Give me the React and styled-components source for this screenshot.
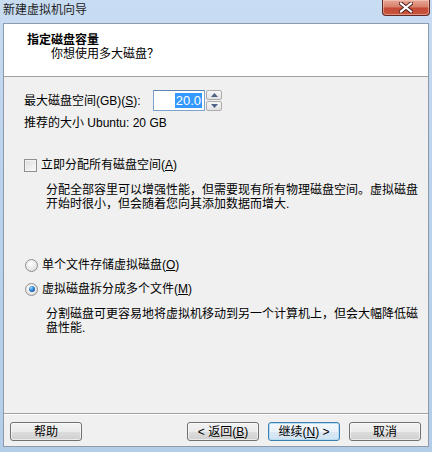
import React from "react";
import styled, { createGlobalStyle } from "styled-components";

const GlobalStyle = createGlobalStyle`
  html, body {
    margin: 0;
    padding: 0;
  }
  body {
    font-family: "Liberation Sans", "Noto Sans CJK SC", sans-serif;
    font-size: 12px;
    color: #000;
    background: #bcd3ec;
  }
`;

const Window = styled.div`
  width: 432px;
  height: 452px;
  display: flex;
  flex-direction: column;
  background: linear-gradient(180deg, #c8dcf2 0%, #bad2ec 40%, #b4cde8 100%);
  overflow: hidden;
`;

const TitleBar = styled.div`
  height: 23px;
  display: flex;
  justify-content: space-between;
  align-items: flex-start;
  padding-left: 3px;
  flex-shrink: 0;
`;

const Title = styled.span`
  font-size: 12px;
  line-height: 20px;
  color: #1e1e1e;
`;

const CloseButton = styled.div`
  width: 46px;
  height: 15px;
  margin-right: 2px;
  border: 1px solid #5e2a26;
  border-top: none;
  border-radius: 0 0 4px 4px;
  background: linear-gradient(180deg, #e7a897 0%, #d8806c 45%, #c44a36 55%, #c9573f 100%);
  box-shadow: inset 0 0 0 1px rgba(255, 220, 210, 0.45);
  display: flex;
  align-items: center;
  justify-content: center;
`;

const Client = styled.div`
  flex: 1;
  margin: 0 3px 5px 3px;
  border: 1px solid #8c9aab;
  background: #f0f0f0;
  display: flex;
  flex-direction: column;
`;

const Header = styled.div`
  height: 53px;
  background: #fff;
  border-bottom: 1px solid #a0a0a0;
  padding: 9px 0 0 23px;
  box-sizing: border-box;
`;

const HeaderTitle = styled.div`
  font-weight: bold;
  line-height: 14px;
`;

const HeaderSub = styled.div`
  line-height: 14px;
  margin: 0 0 0 24px;
`;

const Body = styled.div`
  flex: 1;
  padding: 13px 0 0 20px;
`;

const FieldRow = styled.div`
  display: flex;
  align-items: center;
  height: 21px;
`;

const FieldLabel = styled.label`
  width: 129px;
  line-height: 14px;
`;

const Spin = styled.div`
  display: flex;
  height: 21px;
`;

const SpinInput = styled.div`
  width: 48px;
  height: 19px;
  border: 1px solid #7da2ce;
  border-top-color: #5d85b3;
  background: #fff;
  display: flex;
  justify-content: flex-end;
  align-items: center;
  padding-right: 2px;
`;

const Selected = styled.span`
  background: #3399ff;
  color: #fff;
  line-height: 15px;
  padding: 0 1px;
  font-size: 13px;
`;

const SpinButtons = styled.div`
  display: flex;
  flex-direction: column;
  gap: 1px;
  margin-left: 1px;
`;

const SpinButton = styled.div`
  width: 14px;
  height: 9px;
  border: 1px solid #acacac;
  border-radius: 2px;
  background: linear-gradient(180deg, #f6f6f6, #e2e2e2);
  display: flex;
  align-items: center;
  justify-content: center;
`;

const Hint = styled.div`
  line-height: 14px;
  margin-top: 5px;
`;

const OptionRow = styled.label`
  display: flex;
  align-items: center;
  gap: 4px;
  line-height: 14px;
  margin-top: ${(p) => p.$top}px;
`;

const CheckBox = styled.span`
  width: 11px;
  height: 11px;
  border: 1px solid #8f8f8f;
  background: linear-gradient(135deg, #dcdcdc, #fbfbfb);
  box-shadow: inset 0 0 0 1px #f4f4f4;
  flex-shrink: 0;
`;

const Radio = styled.span`
  width: 11px;
  height: 11px;
  border-radius: 50%;
  border: 1px solid #8f8f8f;
  background: radial-gradient(circle at 40% 35%, #ffffff 0%, #e6e6e6 60%, #cfcfcf 100%);
  flex-shrink: 0;
  display: flex;
  align-items: center;
  justify-content: center;
  margin-left: 1px;

  &::after {
    content: "";
    display: ${(p) => (p.$checked ? "block" : "none")};
    width: 6px;
    height: 6px;
    border-radius: 50%;
    background: radial-gradient(circle at 35% 30%, #9fd7ff 0%, #2a84d2 45%, #0d3f83 100%);
  }
`;

const Desc = styled.p`
  margin: 11px 0 0 22px;
  line-height: 14px;
`;

const Key = styled.u`
  text-underline-offset: 1px;
`;

const Separator = styled.div`
  height: 1px;
  background: #a0a0a0;
  border-bottom: 1px solid #fff;
  margin-bottom: 7px;
`;

const Footer = styled.div`
  display: flex;
  align-items: center;
  padding: 0 7px 5px 6px;
  gap: 9px;
`;

const Spacer = styled.div`
  flex: 1;
`;

const Button = styled.button`
  width: 72px;
  height: 19px;
  padding: 0;
  font: inherit;
  font-size: 12px;
  line-height: 14px;
  color: #000;
  border: 1px solid ${(p) => (p.$default ? "#3c7fb1" : "#707070")};
  border-radius: 3px;
  background: ${(p) =>
    p.$default
      ? "linear-gradient(180deg, #f4f9fd 0%, #eaf3fa 50%, #dbe9f5 51%, #d0e2f1 100%)"
      : "linear-gradient(180deg, #f2f2f2 0%, #ebebeb 50%, #dddddd 51%, #cfcfcf 100%)"};
  box-shadow: ${(p) =>
    p.$default ? "inset 0 0 0 1px #b8dcf4" : "inset 0 0 0 1px rgba(255,255,255,0.6)"};
`;

function CloseGlyph() {
  return (
    <svg width="14" height="11" viewBox="0 0 14 11">
      <path
        d="M2 1.5 L12 9.5 M12 1.5 L2 9.5"
        stroke="#4a1a16"
        strokeWidth="4"
        strokeLinecap="square"
      />
      <path
        d="M2 1.5 L12 9.5 M12 1.5 L2 9.5"
        stroke="#ffffff"
        strokeWidth="2.2"
        strokeLinecap="square"
      />
    </svg>
  );
}

function Arrow({ up }) {
  return (
    <svg width="7" height="4" viewBox="0 0 7 4">
      <path d={up ? "M0 4 L3.5 0 L7 4 Z" : "M0 0 L3.5 4 L7 0 Z"} fill="#4f6287" />
    </svg>
  );
}

export default function App() {
  return (
    <>
      <GlobalStyle />
      <Window>
        <TitleBar>
          <Title>新建虚拟机向导</Title>
          <CloseButton>
            <CloseGlyph />
          </CloseButton>
        </TitleBar>
        <Client>
          <Header>
            <HeaderTitle>指定磁盘容量</HeaderTitle>
            <HeaderSub>你想使用多大磁盘？</HeaderSub>
          </Header>
          <Body>
            <FieldRow>
              <FieldLabel>
                最大磁盘空间(GB)(<Key>S</Key>):
              </FieldLabel>
              <Spin>
                <SpinInput>
                  <Selected>20.0</Selected>
                </SpinInput>
                <SpinButtons>
                  <SpinButton>
                    <Arrow up />
                  </SpinButton>
                  <SpinButton>
                    <Arrow />
                  </SpinButton>
                </SpinButtons>
              </Spin>
            </FieldRow>
            <Hint>推荐的大小 Ubuntu: 20 GB</Hint>

            <OptionRow $top={28}>
              <CheckBox />
              <span>
                立即分配所有磁盘空间(<Key>A</Key>)
              </span>
            </OptionRow>
            <Desc>
              分配全部容里可以增强性能，但需要现有所有物理磁盘空间。虚拟磁盘
              <br />
              开始时很小，但会随着您向其添加数据而增大.
            </Desc>

            <OptionRow $top={47}>
              <Radio />
              <span>
                单个文件存储虚拟磁盘(<Key>O</Key>)
              </span>
            </OptionRow>
            <OptionRow $top={10}>
              <Radio $checked />
              <span>
                虚拟磁盘拆分成多个文件(<Key>M</Key>)
              </span>
            </OptionRow>
            <Desc>
              分割磁盘可更容易地将虚拟机移动到另一个计算机上，但会大幅降低磁
              <br />
              盘性能.
            </Desc>
          </Body>
          <Separator />
          <Footer>
            <Button>帮助</Button>
            <Spacer />
            <Button>
              &lt; 返回(<Key>B</Key>)
            </Button>
            <Button $default>
              继续(<Key>N</Key>) &gt;
            </Button>
            <Button>取消</Button>
          </Footer>
        </Client>
      </Window>
    </>
  );
}
